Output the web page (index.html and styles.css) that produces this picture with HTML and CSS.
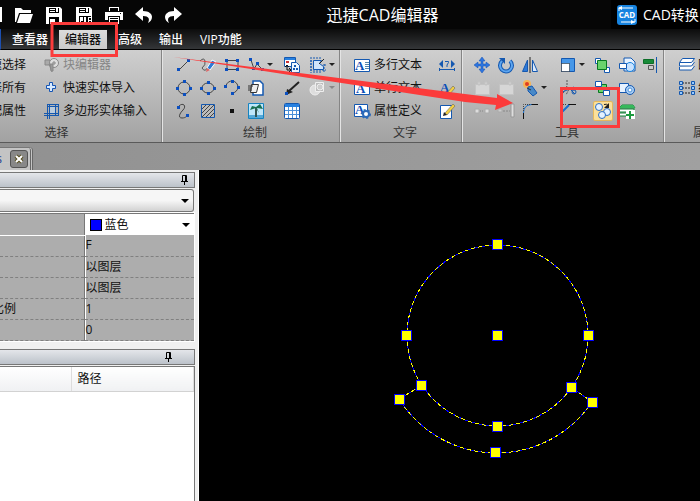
FILE: index.html
```
<!DOCTYPE html>
<html lang="zh-CN">
<head>
  <meta charset="UTF-8" />
  <meta name="viewport" content="width=device-width, initial-scale=1.0" />
  <title>迅捷CAD编辑器</title>
  <link rel="stylesheet" href="styles.css">
</head>
<body>
  <header class="titlebar">
    <div class="quick">
      <span class="quick-edge"></span>
      <button aria-label="打开"><svg width="20" height="18" viewBox="0 0 20 18"><path d="M1 16V2h6l2 2h8v3H5L2 16z" fill="#fff"/><path d="M6 8h13l-3 9H3z" fill="#fff"/></svg></button>
      <button aria-label="保存"><svg width="20" height="18" viewBox="0 0 20 18"><path d="M2 1h14l2 2v15H2z" fill="#fff"/><path d="M5 2h10v5H5zM5 11h10v7H5z" fill="#000"/><path d="M6 3h5v1H6zM6 5h5v1H6zM12 2h2v4h-2zM6 13h5v5H6z" fill="#fff"/></svg></button>
      <button aria-label="另存为"><svg width="20" height="18" viewBox="0 0 20 18"><path d="M2 1h14l2 2v15H2z" fill="#fff"/><path d="M5 2h10v5H5zM5 10h12v8H5z" fill="#000"/><path d="M6 3h5v1H6zM6 5h5v1H6zM12 2h2v4h-2zM6 11h3v4H7v3H6zM10 11h2v6h-2zM14 11h3v1h-2v2h2v1h-2v2h-1z" fill="#fff"/></svg></button>
      <button aria-label="打印"><svg width="20" height="18" viewBox="0 0 20 18"><path d="M5 1h10v4H5zM1 6h18v8h-3v-4H4v4H1zM5 11h10v7H5z" fill="#fff"/><path d="M6 2h8v3H6zM6 12h8v1H6zM6 14h8v2H6zM16 7h1v1h-1z" fill="#000"/></svg></button>
      <button aria-label="撤销"><svg width="20" height="18" viewBox="0 0 20 18"><path d="M1 8l8-7v4c6 0 9 3 9 6 0 3-2 5-4 6 2-4 1-7-5-7v5z" fill="#fff"/></svg></button>
      <button aria-label="重做"><svg width="20" height="18" viewBox="0 0 20 18"><path d="M18 8l-8-7v4c-6 0-9 3-9 6 0 3 2 5 4 6-2-4-1-7 5-7v5z" fill="#fff"/></svg></button>
    </div>
    <h1>迅捷CAD编辑器</h1>
    <button class="convert">
      <svg width="20" height="20" viewBox="0 0 20 20"><rect width="20" height="20" rx="3" fill="#1683e0"/><path d="M2 6V3h14M18 14v3H4" stroke="#fff" fill="none"/><path d="M1 3l4-2v4zM18 17l-4-2v4z" fill="#fff"/><text x="10" y="13" class="cad-text">CAD</text></svg>
      <span>CAD转换</span>
    </button>
  </header>

  <nav class="tabs">
    <button>查看器</button>
    <button class="active">编辑器</button>
    <button>高级</button>
    <button>输出</button>
    <button>VIP功能</button>
  </nav>

  <section class="ribbon">
    <div class="group group-select">
      <div class="tools">
        <button class="cut">速选择</button>
        <button class="wide" disabled><svg width="18" height="18" viewBox="0 0 18 18"><path d="M2 4h5v5H2zM6 8l3 8" fill="#aaa" stroke="#888"/><circle cx="11" cy="7" r="4.500" fill="#ddd" stroke="#888"/><path d="M9 7h4M11 5v4M7 8h3v7H8z" stroke="#888" fill="#999"/></svg>块编辑器</button>
        <button class="cut">择所有</button>
        <button class="wide"><svg width="18" height="18" viewBox="0 0 18 18"><path d="M6.500 3.500h3v3h3v3h-3v3h-3v-3h-3v-3h3z" fill="#d9ebff" stroke="#1555b5"/></svg>快速实体导入</button>
        <button class="cut">配属性</button>
        <button class="wide"><svg width="18" height="18" viewBox="0 0 18 18"><path d="M4.500 2v15M6.500 2v15M12.500 2v11M15.500 2v11M4 2.500h12M4 4.500h12M1 11.500h15M1 13.500h15" stroke="#1458b0" fill="none"/><path d="M7 5h5v6H7z" fill="#bcd"/></svg>多边形实体输入</button>
      </div>
      <div class="caption">选择</div>
    </div>

    <div class="group group-draw">
      <div class="tools">
        <button aria-label="直线"><svg width="18" height="18" viewBox="0 0 18 18"><path d="M4 14L14 4" stroke="#444"/><path d="M2 12h3v3H2zM12 3h3v3h-3z" fill="#0b4fc0"/></svg></button>
        <button aria-label="草图"><svg width="18" height="18" viewBox="0 0 18 18"><path d="M1 5q4-4 5 0t-3 7q3 5 6-1" stroke="#555" fill="none"/><path d="M8 12l5-8 4 2-6 8z" fill="#2d79d8" stroke="#fff"/><path d="M7 16l1-4 3 2z" fill="#d66"/></svg></button>
        <button aria-label="矩形"><svg width="18" height="18" viewBox="0 0 18 18"><path d="M4 4.500h11v9H4z" stroke="#444" fill="none"/><path d="M2 3h3v3H2zM13 3h3v3h-3zM2 12h3v3H2zM13 12h3v3h-3z" fill="#0b4fc0"/></svg></button>
        <button class="split" aria-label="多段线"><svg width="18" height="18" viewBox="0 0 18 18"><path d="M4 4l3 9 3-5 5 5" stroke="#444" fill="none"/><path d="M2 2h3v3H2zM5 11h3v3H5zM9 6h3v3H9zM14 12h3v3h-3z" fill="#0b4fc0"/></svg><i></i></button>
        <button aria-label="插入块"><svg width="18" height="18" viewBox="0 0 18 18"><path d="M1.500 1.500h11v9h-11z" fill="#fff" stroke="#1458b0"/><path d="M2 2h10v2H2z" fill="#2680e0"/><path d="M3 5h3v2H3z" fill="#c33"/><path d="M8.500 6.500h5l3 3v7h-8z" fill="#eef6ff" stroke="#1458b0"/><path d="M11 9h2v2h-2zM10 12h2v2h-2zM13 12h2v2h-2z" fill="#1458b0"/><path d="M4 9v5h4M2 11l2-2 2 2M6 12l2 2-2 2" stroke="#111" fill="none"/></svg></button>
        <button class="split" aria-label="创建块"><svg width="18" height="18" viewBox="0 0 18 18"><path d="M2 1v16M5 1v2M8 1v2M11 1v2M15 8v9M5 15v2M8 15v2M11 15v2M1 5h2M1 8h2M1 11h2M1 14h16M15 9h2" stroke="#1458b0" stroke-dasharray="2 1"/><path d="M4.500 4.500h8l-2 3 4 3v3h-10z" fill="#cfe4fa" stroke="#1458b0"/><path d="M10 8l5-5" stroke="#222"/></svg><i></i></button>

        <button aria-label="圆"><svg width="18" height="18" viewBox="0 0 18 18"><circle cx="9" cy="9" r="6" stroke="#444" fill="none"/><path d="M8 1h3v3H8zM8 14h3v3H8zM1 8h3v3H1zM14 8h3v3h-3z" fill="#0b4fc0"/></svg></button>
        <button aria-label="椭圆"><svg width="18" height="18" viewBox="0 0 18 18"><ellipse cx="9" cy="9" rx="6" ry="5" stroke="#444" fill="none"/><path d="M8 2h3v3H8zM8 13h3v3H8zM1 8h3v3H1zM14 8h3v3h-3z" fill="#0b4fc0"/></svg></button>
        <button aria-label="圆弧"><svg width="18" height="18" viewBox="0 0 18 18"><path d="M3 7a6 6 0 1 1 6 7" stroke="#444" fill="none"/><path d="M1 6h3v3H1zM8 1h3v3H8zM14 7h3v3h-3zM8 13h3v3H8z" fill="#0b4fc0"/></svg></button>
        <button class="split" aria-label="复制图形"><svg width="18" height="18" viewBox="0 0 18 18"><path d="M6 2h7l3 3v11H6z" fill="#fff" stroke="#1458b0" stroke-width="1.500"/><path d="M4.500 5.500h7l-2 8h-6z" fill="#eee" stroke="#333"/><path d="M1 7h5M1 9h4M1 11h4" stroke="#333"/></svg></button>
        <button aria-label="射线"><svg width="18" height="18" viewBox="0 0 18 18"><path d="M6 12l10-9" stroke="#222" stroke-width="2"/><path d="M4 10l6 3-7 3z" fill="#222"/><path d="M2 13h3v3H2z" fill="#0b4fc0"/></svg></button>
        <button class="split off" aria-label="三维图形" disabled><svg width="18" height="18" viewBox="0 0 18 18"><circle cx="6" cy="11" r="5" fill="#ddd" stroke="#eee"/><path d="M6.500 3.500h8v9h-8z" fill="#bbb" stroke="#eee"/><circle cx="11" cy="8" r="3" fill="#ccc" stroke="#eee"/></svg><i></i></button>

        <button aria-label="样条曲线"><svg width="18" height="18" viewBox="0 0 18 18"><path d="M4 4c4-4 8 0 4 4s-5 8-1 8 4-2 6-2" stroke="#444" fill="none"/><path d="M2 4h3v3H2zM11 12h3v3h-3z" fill="#0b4fc0"/></svg></button>
        <button aria-label="填充"><svg width="18" height="18" viewBox="0 0 18 18"><path d="M2.500 2.500h13v13h-13z" fill="#bbb" stroke="#1458b0"/><path d="M3 7l4-4M3 11l8-8M3 15L15 3M7 15l8-8M11 15l4-4" stroke="#444"/></svg></button>
        <button aria-label="点"><svg width="18" height="18" viewBox="0 0 18 18"><path d="M7 7h4v4H7z" fill="#111"/></svg></button>
        <button class="split" aria-label="图像"><svg width="18" height="18" viewBox="0 0 18 18"><path d="M1.500 1.500h15v15h-15z" fill="#bfe6fa" stroke="#1683c0"/><path d="M2 13h14v3H2z" fill="#54a8d8"/><path d="M9 6v9" stroke="#355" stroke-width="2"/><path d="M9 6L3 8l2-4 4 1 4-3 3 5-6-1 2 5z" fill="#187052"/></svg></button>
        <button aria-label="表格"><svg width="18" height="18" viewBox="0 0 18 18"><rect x="1.500" y="1.500" width="15" height="15" rx="1" fill="#fff" stroke="#1458b0"/><path d="M2 2h14v3H2z" fill="#2680e0"/><path d="M2 8.500h14M2 12.500h14M5.500 5v11M9.500 5v11M13.500 5v11" stroke="#4a90d8"/></svg></button>
      </div>
      <div class="caption">绘制</div>
    </div>

    <div class="group group-text">
      <div class="tools">
        <button class="wide"><svg width="18" height="18" viewBox="0 0 18 18"><path d="M1.500 3.500h15v12h-15z" fill="#fff" stroke="#1458b0"/><text x="2" y="14" class="letter">A</text><path d="M12 6.500h4M12 8.500h4M12 10.500h4M12 12.500h4" stroke="#58a"/></svg>多行文本</button>
        <button aria-label="标注文字"><svg width="18" height="18" viewBox="0 0 18 18"><path d="M1 8l4-4v8zM17 8l-4-4v8z" fill="#1458b0"/><path d="M7 5.500h3.500v1L9 9v2M1 13.500h16M1.500 12v3M16.500 12v3" fill="none" stroke="#1458b0"/></svg></button>
        <button class="wide"><svg width="18" height="18" viewBox="0 0 18 18"><path d="M1.500 3.500h15v12h-15z" fill="#fff" stroke="#1458b0"/><text x="3" y="14" class="letter">A</text></svg>单行文本</button>
        <button aria-label="编辑文字"><svg width="18" height="18" viewBox="0 0 18 18"><text x="2" y="13" class="letter">A</text><path d="M9 14l6-7 2 2-6 7-3 1z" fill="#f2cf44" stroke="#555" stroke-width=".5"/></svg></button>
        <button class="wide"><svg width="18" height="18" viewBox="0 0 18 18"><path d="M1.500 2.500h13v12h-13z" fill="#fff" stroke="#1458b0"/><text x="2" y="12" class="letter">A</text><circle cx="13" cy="12" r="3" fill="#fff" stroke="#2d6ab8" stroke-width="2"/><circle cx="13" cy="12" r="4" fill="none" stroke="#2d6ab8" stroke-width="2" stroke-dasharray="2 2"/></svg>属性定义</button>
        <button aria-label="编辑属性"><svg width="18" height="18" viewBox="0 0 18 18"><path d="M2.500 3.500h11v13h-11z" fill="#fff" stroke="#1458b0"/><path d="M7 11l8-9 2 2-8 9z" fill="#f2cf44" stroke="#555" stroke-width=".5"/><path d="M5 14l1-4 3 3z" fill="#222"/></svg></button>
      </div>
      <div class="caption">文字</div>
    </div>

    <div class="group group-edit">
      <div class="tools">
        <button aria-label="移动"><svg width="18" height="18" viewBox="0 0 18 18"><path d="M9 1l3 4h-2v3h3V6l4 3-4 3v-2h-3v3h2l-3 4-3-4h2v-3H5v2L1 9l4-3v2h3V5H6z" fill="#2d75e0" stroke="#1550b0" stroke-width=".5"/></svg></button>
        <button aria-label="旋转"><svg width="18" height="18" viewBox="0 0 18 18"><path d="M5 5a6 6 0 1 0 8 0" stroke="#1458b0" stroke-width="4" fill="none"/><path d="M5 5a6 6 0 1 0 8 0" stroke="#5ca5f0" stroke-width="2" fill="none"/><path d="M2 2h6v6z" fill="#1458b0"/></svg></button>
        <button aria-label="镜像"><svg width="18" height="18" viewBox="0 0 18 18"><path d="M6.500 4v11.500h-5z" fill="#2d79d8" stroke="#1458b0"/><path d="M11.500 4v11.500h5z" fill="#dbe9fa" stroke="#1458b0"/><path d="M9 1v16" stroke="#222"/></svg></button>
        <button class="split" aria-label="缩放"><svg width="18" height="18" viewBox="0 0 18 18"><path d="M2.500 2.500h13v13h-13z" fill="#4697e8" stroke="#1458b0"/><path d="M2.500 7.500h8v8h-8z" fill="#fff" stroke="#111" stroke-dasharray="1 1"/></svg><i></i></button>
        <button aria-label="前置"><svg width="18" height="18" viewBox="0 0 18 18"><path d="M2.500 2.500h5v5h-5zM11.500 11.500h5v5h-5z" fill="#fff" stroke="#1458b0"/><path d="M4.500 4.500h9v9h-9z" fill="#69d36c" stroke="#087820"/></svg></button>
        <button aria-label="查找图形"><svg width="18" height="18" viewBox="0 0 18 18"><path d="M6 2h7l4 4v9H6z" fill="#e7f2ff" stroke="#1458b0"/><circle cx="12" cy="11" r="4.500" fill="#c7e2ff" stroke="#1683e0"/><path d="M1.500 7.500h7v5h-7z" fill="#fff" stroke="#1458b0"/></svg></button>
        <button aria-label="对齐"><svg width="18" height="18" viewBox="0 0 18 18"><path d="M2.500 3.500h10v4h-10z" fill="#188a38" stroke="#0d6e28"/><path d="M7.500 9.500h5v4h-5z" fill="#ccc" stroke="#555"/><path d="M15.500 1v16" stroke="#1458b0"/></svg></button>

        <button aria-label="组合" disabled><svg width="18" height="18" viewBox="0 0 18 18"><path d="M2.500 5.500h14v10h-14zM5 3h2v3H5zM12 3h2v3h-2z" fill="#d6d6d6" stroke="#c4c4c4"/></svg></button>
        <button aria-label="取消组合" disabled><svg width="18" height="18" viewBox="0 0 18 18"><path d="M2.500 5.500h14v10h-14zM12 3h2v3h-2z" fill="#d6d6d6" stroke="#c4c4c4"/></svg></button>
        <button class="split" aria-label="分解"><svg width="18" height="18" viewBox="0 0 18 18"><circle cx="6" cy="5" r="4" fill="#f6b454"/><circle cx="6" cy="5" r="2" fill="#e03c20"/><path d="M7 8l4-1 5 7-4 3-5-5z" fill="#4889c8" stroke="#1458b0"/><path d="M6 9l4 2" stroke="#333"/></svg><i></i></button>
        <button class="split" aria-label="修剪"><svg width="18" height="18" viewBox="0 0 18 18"><path d="M8 1v6l-5 9M11 8l-4 8" stroke="#555" fill="none" stroke-dasharray="2 1"/><path d="M1 14l14-6M9 8l7 7" stroke="#1458b0"/><circle cx="15" cy="13" r="2" fill="none" stroke="#1458b0"/></svg></button>
        <button aria-label="后置"><svg width="18" height="18" viewBox="0 0 18 18"><path d="M5.500 5.500h8v8h-8z" fill="#69d36c" stroke="#087820"/><path d="M2.500 2.500h6v5h-6zM10.500 11.500h6v5h-6z" fill="#fff" stroke="#1458b0"/></svg></button>
        <button aria-label="查找"><svg width="18" height="18" viewBox="0 0 18 18"><path d="M1.500 4.500h9v9h-9z" fill="#e7f2ff" stroke="#1458b0"/><circle cx="12" cy="11" r="4.500" fill="#a9cff6" stroke="#1458b0"/><circle cx="12" cy="11" r="2" fill="#fff" stroke="#4a90d8"/></svg></button>
        <span></span>

        <button aria-label="打断" disabled><svg width="18" height="18" viewBox="0 0 18 18"><path d="M2 7h4v4H2zM12 7h4v4h-4z" fill="#ddd" stroke="#aaa"/><path d="M7 9h4" stroke="#888" stroke-dasharray="1 1"/></svg></button>
        <button aria-label="延伸" disabled><svg width="18" height="18" viewBox="0 0 18 18"><path d="M14 2h3v13h-3z" fill="#ddd" stroke="#999"/><path d="M1 7h4v3H1z" fill="#ccc" stroke="#aaa"/><path d="M6 9h7" stroke="#888" stroke-dasharray="2 1"/></svg></button>
        <button aria-label="圆角"><svg width="18" height="18" viewBox="0 0 18 18"><path d="M2.500 17v-6M10 2.500h7" stroke="#111"/><path d="M2.500 11q0-8 8-8.500" stroke="#1670d0" fill="none"/><path d="M2.500 9V2.500H9" stroke="#444" fill="none" stroke-dasharray="1 1"/></svg></button>
        <button class="split" aria-label="倒角"><svg width="18" height="18" viewBox="0 0 18 18"><path d="M3.500 17v-7M9 2.500h8" stroke="#111"/><path d="M3 10l7-7" stroke="#1670d0" stroke-width="2"/><path d="M3.500 8V2.500H8" stroke="#444" fill="none" stroke-dasharray="1 1"/></svg></button>
        <button class="picked" aria-label="复制"><svg width="18" height="18" viewBox="0 0 18 18"><g fill="#e5f2ff" stroke="#2d6fc5"><circle cx="5" cy="5" r="3.500"/><circle cx="13" cy="10" r="3.500"/><circle cx="8" cy="13" r="3.500"/></g><path d="M10 2.500q3-1 4 1" fill="none" stroke="#222"/><path d="M15 1v5h-5z" fill="#222"/></svg></button>
        <button aria-label="添加图层"><svg width="18" height="18" viewBox="0 0 18 18"><path d="M4 3h11l2 3H1zM1 7h15v3H1zM1 11h15v3H1z" fill="#fff" stroke="#138438"/><path d="M4 3h11l2 3H1z" fill="#35b85b"/><path d="M8 8h9v9H8z" fill="#fff"/><path d="M11 9h2v3h3v2h-3v3h-2v-3H8v-2h3z" fill="#1b9a3e"/></svg></button>
      </div>
      <div class="caption">工具</div>
    </div>

    <div class="group group-layer">
      <div class="tools">
        <button class="wide"><svg width="18" height="18" viewBox="0 0 18 18"><path d="M4.500 2.500h12l-3 4h-12zM1.500 7v3h12l3-4M1.500 11v3h12l3-4" fill="#fff" stroke="#1458b0"/></svg>图</button>
        <button class="wide"><svg width="18" height="18" viewBox="0 0 18 18"><path d="M4 4h10M4 9h10M4 14h10" stroke="#222" stroke-dasharray="2 1"/><path d="M1.500 2.500h3v3h-3zM13.500 2.500h3v3h-3zM1.500 7.500h3v3h-3zM13.500 7.500h3v3h-3zM1.500 12.500h3v3h-3zM13.500 12.500h3v3h-3z" fill="#9cf" stroke="#1458b0"/></svg>线</button>
        <span></span>
      </div>
      <div class="caption">属</div>
    </div>
  </section>

  <div class="doc-tabs">
    <div class="doc-tab"><span>s</span><button aria-label="关闭"><svg width="10" height="10" viewBox="0 0 10 10"><path d="M2 2l6 6M8 2l-6 6" stroke="#554d20" stroke-width="4"/><path d="M2 2l6 6M8 2l-6 6" stroke="#fff" stroke-width="2"/></svg></button></div>
  </div>

  <main class="workspace">
    <aside class="side">
      <div class="panel-head"><button aria-label="固定属性"><svg width="9" height="10" viewBox="0 0 9 10"><path d="M2.500 6V.5h4V6M5.500 1v5M1 6.500h7M4.500 7v3" stroke="#000" fill="none"/></svg></button></div>
      <div class="drop object-type">
        <select aria-label="对象类型"><option></option></select>
        <i></i>
      </div>
      <table class="props">
        <tr class="color-row"><th></th><td><div class="drop"><span class="swatch"></span><select aria-label="颜色"><option>蓝色</option></select><i></i></div></td></tr>
        <tr><th></th><td>F</td></tr>
        <tr><th></th><td>以图层</td></tr>
        <tr><th></th><td>以图层</td></tr>
        <tr><th><span>比例</span></th><td>1</td></tr>
        <tr><th></th><td>0</td></tr>
      </table>
      <div class="panel-head second"><button aria-label="固定路径"><svg width="9" height="10" viewBox="0 0 9 10"><path d="M2.500 6V.5h4V6M5.500 1v5M1 6.500h7M4.500 7v3" stroke="#000" fill="none"/></svg></button></div>
      <div class="paths">
        <table>
          <tr><th></th><th>路径</th></tr>
        </table>
      </div>
    </aside>
    <div class="canvas">
      <svg width="501" height="331" viewBox="199 170 501 331" shape-rendering="crispEdges">
        <g class="line">
          <circle cx="497.500" cy="335.500" r="90.500"/>
          <path d="M421 386L399 399A115 115 0 0 0 592 402L571 387"/>
        </g>
        <g class="line dash">
          <circle cx="497.500" cy="335.500" r="90.500"/>
          <path d="M421 386L399 399A115 115 0 0 0 592 402L571 387"/>
        </g>
        <g class="grip">
          <rect x="492.500" y="239.500" width="10" height="10"/>
          <rect x="401.500" y="330.500" width="10" height="10"/>
          <rect x="492.500" y="330.500" width="10" height="10"/>
          <rect x="583.500" y="330.500" width="10" height="10"/>
          <rect x="416.500" y="380.500" width="10" height="10"/>
          <rect x="566.500" y="382.500" width="10" height="10"/>
          <rect x="394.500" y="394.500" width="10" height="10"/>
          <rect x="587.500" y="397.500" width="10" height="10"/>
          <rect x="492.500" y="421.500" width="10" height="10"/>
          <rect x="490.500" y="447.500" width="10" height="10"/>
        </g>
      </svg>
    </div>
  </main>

  <!-- red marks over the ribbon -->
  <svg class="marks" width="700" height="140" viewBox="0 0 700 140">
    <path d="M52 23.500h64.500v32H52zM561.500 88.500h57v38h-57z" fill="none" stroke="#fb3b3b" stroke-width="3"/>
    <path d="M173 57L465 94l32 4v-4l16 9-18 7 1-5-31-3z" fill="#fb3b3b"/>
  </svg>
</body>
</html>
```
FILE: styles.css
```
* {
  margin: 0; padding: 0; box-sizing: border-box;
}
body {
  min-height: 100vh;
  display: flex; flex-direction: column;
  position: relative; overflow: hidden;
  font: 12px/16px "Open Sans", "Noto Sans CJK SC", sans-serif;
  color: #111; background: #000;
}
button, select {
  font: inherit; color: inherit;
  background: none; border: none;
}
svg {
  display: block; flex: none;
}
.titlebar {
  display: flex; align-items: center;
  height: 29px; background: #060606; color: #fff;
}
.quick {
  display: flex; align-items: center; gap: 10px;
}
.quick-edge {
  width: 2px; height: 15px; margin-right: 2px;
  background: #fff;
}
.titlebar h1 {
  flex: 1; padding-right: 30px;
  text-align: center; white-space: nowrap;
  font-size: 16px; font-weight: 400; line-height: 28px;
}
.convert {
  display: flex; align-items: center; gap: 6px;
  width: 89px; height: 29px; padding-left: 6px;
  background: #000; overflow: hidden;
  font-size: 14px; line-height: 28px; white-space: nowrap;
}
.cad-text {
  font: bold 8px "Open Sans", sans-serif;
  fill: #fff; text-anchor: middle;
}
.tabs {
  display: flex; gap: 5px;
  height: 21px; padding: 1px 0 0 5px;
  border-left: 1px solid #1c4fb0;
  border-bottom: 1px solid #000;
  background: linear-gradient(#0c0c0c, #343638);
}
.tabs button {
  padding: 0 6px; color: #fff;
  font-weight: 500; line-height: 18px;
}
.tabs .active {
  background: linear-gradient(#dcdcdc, #cacaca);
  color: #111;
}
.ribbon {
  display: flex;
  height: 93px;
  background: linear-gradient(#cfcfcf, #a2a2a2);
  border-bottom: 1px solid #5a5a5a;
}
.group {
  display: flex; flex-direction: column;
  flex: none; padding-top: 3px;
  border-right: 1px solid #858585;
  border-left: 1px solid #e4e4e4;
}
.group-select { width: 162px; border-left: none; }
.group-draw { width: 178px; }
.group-text { width: 122px; }
.group-edit { width: 202px; }
.group-layer {
  flex: 1; border-right: none; overflow: hidden;
}
.tools {
  display: grid;
  grid-auto-rows: 23px; align-items: center;
}
.group-select .tools {
  grid-template-columns: 26px 1fr; column-gap: 16px;
}
.group-draw .tools {
  grid-template-columns: 24px 24px 24px 36px 26px 36px;
  padding-left: 9px;
}
.group-text .tools {
  grid-template-columns: 83px 24px; padding-left: 11px;
}
.group-edit .tools {
  grid-template-columns: 24px 24px 38px 34px 25px 23px 24px;
  padding-left: 7px;
}
.group-layer .tools {
  padding-left: 12px;
}
.tools button {
  display: flex; align-items: center;
  height: 20px; padding-left: 3px;
  white-space: nowrap;
}
.tools .wide {
  gap: 2px; padding-left: 1px;
}
.group-text .wide {
  gap: 3px;
}
.tools .cut {
  justify-content: flex-end;
  padding: 0; overflow: hidden;
}
.tools button:disabled {
  color: #858585;
}
.tools i, .drop i {
  border: 4px solid transparent;
  border-top-color: #222; border-bottom: none;
}
.tools i {
  border-width: 3px; border-bottom: none;
  margin-left: 2px;
}
.tools .off i {
  border-top-color: #888;
}
.tools .picked {
  justify-content: center;
  width: 20px; margin-left: 3px; padding-left: 0;
  background: #fbe09a; border: 1px solid #e6b95c;
  border-radius: 2px;
}
.letter {
  font: bold 13px "Liberation Serif", serif;
  fill: #0b4fb8;
}
.caption {
  line-height: 22px; text-align: center; color: #333;
}
.group-select .caption {
  padding-right: 48px;
}
.group-draw .caption, .group-text .caption, .group-edit .caption {
  padding-left: 8px;
}
.group-layer .caption {
  padding-left: 28px; text-align: left;
}
.doc-tabs {
  display: flex; align-items: flex-end;
  height: 27px;
  background: linear-gradient(90deg, #919191, #a0a0a0);
}
.doc-tab {
  display: flex; align-items: center;
  width: 33px; height: 23px;
  background: #c4c4c4;
  border-top: 1px solid #777;
  border-right: 3px double #666;
  border-radius: 0 4px 0 0;
}
.doc-tab span {
  width: 2px; margin-right: 8px;
  direction: rtl; overflow: hidden; color: #1c3c90;
}
.doc-tab button {
  display: flex; align-items: center; justify-content: center;
  width: 18px; height: 18px;
  background: #888; border: 1px solid #555;
  border-radius: 3px;
}
.workspace {
  flex: 1; display: flex;
}
.side {
  flex: none; display: flex; flex-direction: column;
  width: 199px; padding: 2px 3px 0 0;
  background: #f0f0f0; border-right: 1px solid #fff;
}
.panel-head {
  display: flex; justify-content: flex-end; align-items: center;
  height: 16px; padding-right: 5px;
  background: linear-gradient(#e4e6ea, #bcc2ca);
  border: 1px solid #777; border-left: none;
}
.panel-head.second {
  margin-top: 8px; padding-right: 21px;
}
.drop {
  position: relative;
  display: flex; align-items: center;
}
.drop select {
  width: 100%; height: 100%;
  appearance: none;
}
.drop i {
  position: absolute; right: 4px;
  border-top-color: #000;
}
.object-type {
  height: 23px; margin: 1px 1px 1px 0;
  background: linear-gradient(#f6f6f6 50%, #d2d2d2);
  border: 1px solid #777; border-left: none;
  border-radius: 0 3px 3px 0;
}
.props {
  width: 194px; height: 128px;
  border-collapse: collapse; table-layout: fixed;
  background: #adadad;
  border-top: 1px solid #777;
  outline: 1px solid #fff;
}
.props th, .props td {
  height: 21px;
  border-bottom: 1px dashed #808080;
  text-align: left; font-weight: 400; line-height: 20px;
}
.props th {
  width: 84px; border-right: 1px solid #777;
  overflow: hidden;
}
.props th span {
  margin-left: -8px;
}
.props td {
  border-left: 1px solid #777; padding-left: 1px;
  box-shadow: inset 1px 0 #fff;
}
.props .color-row th {
  border-bottom: 1px solid #fff;
}
.props .color-row td {
  border-bottom: none;
}
.props .drop {
  height: 21px; background: #fff;
}
.props select {
  padding-left: 19px;
}
.swatch {
  position: absolute; left: 4px;
  width: 12px; height: 12px;
  background: #00f; border: 1px solid #000;
}
.paths {
  flex: 1; margin-top: 1px; background: #fff;
  border: 1px solid #777; border-left: none; border-bottom: none;
}
.paths table {
  width: 100%; border-collapse: collapse;
}
.paths th {
  height: 24px; padding-left: 6px;
  background: linear-gradient(#fff, #f0f1f3);
  border-bottom: 1px solid #d2d2d2;
  border-right: 1px solid #ddd;
  text-align: left; font-weight: 400;
}
.paths th:first-child {
  width: 71px;
}
.canvas {
  flex: 1; min-width: 0;
  background: #000; overflow: hidden;
}
.line {
  fill: none; stroke: #00f;
}
.dash {
  stroke: #ff0; stroke-dasharray: 4 3;
}
.grip {
  fill: #ff0; stroke: #00f;
}
.marks {
  position: absolute; top: 0; left: 0;
  pointer-events: none;
}
```
